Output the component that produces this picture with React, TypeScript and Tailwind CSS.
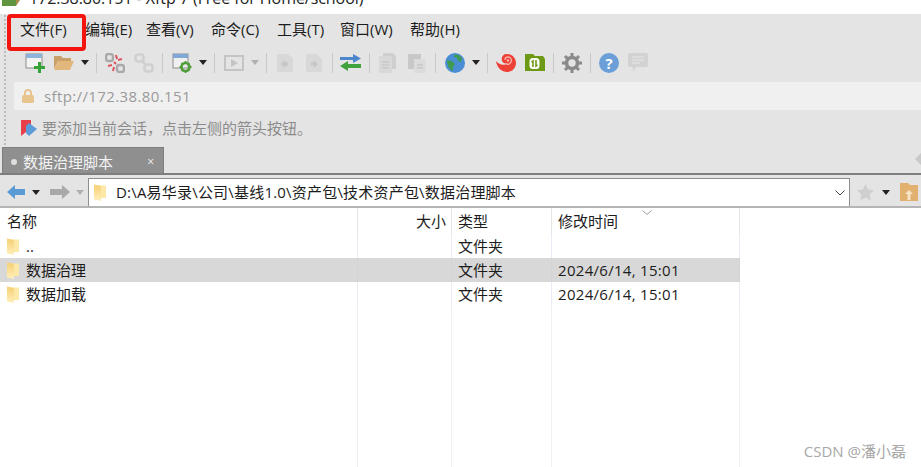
import React from "react";

const Caret = ({ c = "#222", className = "" }: { c?: string; className?: string }) => (
  <svg width="8" height="5" viewBox="0 0 8 5" className={className}><path d="M0 0h8L4 5z" fill={c} /></svg>
);
const Sep = ({ className = "" }: { className?: string }) => <div className={`w-px h-[20px] bg-[#c8c8c8] ${className}`} />;
const Folder = () => (
  <svg width="12" height="17" viewBox="0 0 12 17">
    <defs>
      <linearGradient id="fg" x1="0" y1="0" x2="0" y2="1">
        <stop offset="0" stopColor="#f6cf72" />
        <stop offset="1" stopColor="#fff0bd" />
      </linearGradient>
    </defs>
    <path d="M4 1.500h8V14H4z" fill="#fde8a8" />
    <path d="M0 0.500 7 2v15L0 15.500z" fill="url(#fg)" />
  </svg>
);
const NewSession = () => (
  <svg width="20" height="20" viewBox="0 0 20 20">
    <rect x="1" y="1" width="16" height="14" fill="#f4f4f4" stroke="#8c8c8c" />
    <rect x="1" y="1" width="16" height="4" fill="#8fb4dc" />
    <path d="M13 9h3v4h4v3h-4v4h-3v-4H9v-3h4z" fill="#37a337" />
  </svg>
);
const OpenFolder = () => (
  <svg width="20" height="18" viewBox="0 0 20 18">
    <path d="M0 2h7l2 2h8v3H4L0 15z" fill="#c9a067" />
    <path d="M4 7h16l-4 9H0z" fill="#e2b77c" />
  </svg>
);
const Unlink = () => (
  <svg width="20" height="20" viewBox="0 0 20 20" fill="none">
    <rect x="1" y="1" width="7" height="7" rx="2.500" stroke="#a9a9a9" strokeWidth="2.400" />
    <rect x="12" y="12" width="7" height="7" rx="2.500" stroke="#a9a9a9" strokeWidth="2.400" />
    <path d="M11 2l1 4M17 6l-4 1M3 13l4-1M8 18l1-4M9 9l2 2" stroke="#e0525c" strokeWidth="2" />
  </svg>
);
const LinkI = () => (
  <svg width="20" height="20" viewBox="0 0 20 20" fill="none" stroke="#d0d0d0" strokeWidth="2.600">
    <rect x="1.500" y="1.500" width="8" height="7" rx="2.500" />
    <rect x="10.500" y="11.500" width="8" height="7" rx="2.500" />
    <path d="M7 7l6 6" />
  </svg>
);
const WinGear = () => (
  <svg width="20" height="20" viewBox="0 0 20 20">
    <rect x="1" y="1" width="15" height="14" fill="#efefef" stroke="#8c8c8c" />
    <rect x="1" y="1" width="15" height="4" fill="#7fa8d6" />
    <circle cx="13.500" cy="14" r="4" fill="none" stroke="#4f9e3a" strokeWidth="2.600" />
    <path d="M13.500 8v2M13.500 18v2M7.500 14h2M17.500 14h2M9.500 10l1.400 1.400M16 16.500l1.400 1.400M9.500 18l1.400-1.400M16 11.500l1.400-1.400" stroke="#4f9e3a" strokeWidth="1.800" />
  </svg>
);
const Play = () => (
  <svg width="20" height="16" viewBox="0 0 20 16">
    <rect x="1" y="1" width="18" height="14" fill="#e4e4e4" stroke="#c4c4c4" strokeWidth="2" />
    <path d="M7 4l7 4-7 4z" fill="#c4c4c4" />
  </svg>
);
const Doc = ({ dir }: { dir: "l" | "r" }) => (
  <svg width="16" height="18" viewBox="0 0 16 18">
    <path d="M0 0h11l5 5v13H0z" fill="#d8d8d8" />
    <path d={dir === "l" ? "M4 10l4-4v2.500h3v3H8V14z" : "M12 10L8 6v2.500H5v3h3V14z"} fill="#c6c6c6" />
  </svg>
);
const Transfer = () => (
  <svg width="21" height="17" viewBox="0 0 21 17">
    <path d="M0 3h13V0l8 4.500L13 9V6H0z" fill="#4c86cc" />
    <path d="M21 10H8V7l-8 5 8 5v-3h13z" fill="#3fa23f" />
  </svg>
);
const Copy = () => (
  <svg width="17" height="20" viewBox="0 0 17 20">
    <path d="M4 0h10l3 3v13H4z" fill="#cfcfcf" />
    <path d="M0 3h13v17H0z" fill="#d8d8d8" />
    <path d="M3 9h7M3 12h7M3 15h7" stroke="#c2c2c2" />
  </svg>
);
const Paste = () => (
  <svg width="18" height="20" viewBox="0 0 18 20">
    <path d="M0 1h13v15H0z" fill="#c8c8c8" />
    <path d="M6 6h12v14H6z" fill="#dcdcdc" />
    <path d="M9 12h6M9 15h6" stroke="#bdbdbd" />
  </svg>
);
const Globe = () => (
  <svg width="20" height="20" viewBox="0 0 20 20">
    <circle cx="10" cy="10" r="10" fill="#4a8fd6" />
    <path d="M9 2c3-1 6 0 8 3l-1 4-3-1-1-3-3-1zM2 7l5 1 3 3-2 3 0 4C5 17 2 13 2 7z" fill="#3f9b53" />
  </svg>
);
const Spiral = () => (
  <svg width="20" height="18" viewBox="0 0 20 18">
    <path d="M0 7c1 7 6 11 11 11 5 0 9-4 9-9 0-5-4-9-9-9C7 0 5 3 6 7c1 2 3 3 6 2-3 3-9 2-12-2z" fill="#ee4135" />
    <path d="M9 6c0-2 1-3 3-3 3 0 4 3 3 5-1 2-3 3-5 2" fill="none" stroke="#f8b3ad" strokeWidth="1.300" />
    <circle cx="12" cy="6.500" r="1.300" fill="#f8b3ad" />
  </svg>
);
const GreenFolder = () => (
  <svg width="20" height="17" viewBox="0 0 20 17">
    <path d="M0 0h8l2 2h8l2 3v12H0z" fill="#6d9a14" />
    <rect x="4.500" y="4" width="10" height="11" rx="3.500" fill="#fff" />
    <path d="M8 13V7l-1.500 1M11 6v6l1.500-1" fill="none" stroke="#6d9a14" strokeWidth="1.600" />
  </svg>
);
const Gear = () => (
  <svg width="20" height="20" viewBox="0 0 20 20">
    <circle cx="10" cy="10" r="5.500" fill="none" stroke="#8a8a8a" strokeWidth="3.600" />
    <path d="M10 0v4M10 16v4M0 10h4M16 10h4M3 3l3 3M14 14l3 3M3 17l3-3M14 6l3-3" stroke="#8a8a8a" strokeWidth="3" />
  </svg>
);
const Help = () => (
  <div className="w-[20px] h-[20px] rounded-full bg-[#6c9fd8] text-white text-[15px] font-bold leading-[20px] text-center">?</div>
);
const Chat = () => (
  <svg width="20" height="19" viewBox="0 0 20 19">
    <path d="M2 0h16a2 2 0 0 1 2 2v10a2 2 0 0 1-2 2H8l-3 5v-5H2a2 2 0 0 1-2-2V2a2 2 0 0 1 2-2z" fill="#d2d2d2" />
    <path d="M4 4h12M4 7h12M4 10h8" stroke="#e8e8e8" />
  </svg>
);

const Row = ({ name, time, selected }: { name: string; time?: string; selected?: boolean }) => {
  const line = selected ? "border-[#d4d4d4]" : "border-[#e9eef6]";
  return (
    <div className="flex h-[24px] items-center text-[15px] text-[#1c1c1c]">
      <div className={`flex h-full w-[740px] ${selected ? "bg-[#d8d8d8]" : ""}`}>
        <div className={`w-[358px] flex items-center pl-[7px] border-r ${line}`}>
          <Folder />
          <span className="ml-[7px]">{name}</span>
        </div>
        <div className={`w-[94px] border-r ${line}`} />
        <div className={`w-[100px] pl-[6px] border-r ${line} flex items-center`}>文件夹</div>
        <div className={`flex-1 pl-[6px] border-r ${line} flex items-center tracking-[0.3px]`}>{time}</div>
      </div>
    </div>
  );
};

export default function App() {
  return (
    <div className="relative w-[921px] h-[467px] overflow-hidden bg-white font-['Open_Sans','Noto_Sans_CJK_SC',sans-serif] text-[15px]">
      {/* title */}
      <div className="h-[14px] overflow-hidden flex items-end pl-[2px] bg-white">
        <svg width="18" height="6" viewBox="0 0 18 6" className="mb-[8px]"><path d="M0 0h14v6H0z" fill="#5f9440" /><path d="M14 0h4l-4 6z" fill="#a98a4a" /></svg>
        <span className="ml-[9px] text-[16px] leading-[24px] tracking-[-0.05px] text-[#222] whitespace-nowrap mb-[4px]">172.38.80.151 - Xftp 7 (Free for Home/school)</span>
      </div>
      {/* menu and bars */}
      <div className="bg-[#e4e4e4]">
        <div className="h-[32px] flex items-center text-[15px] text-[#1c1c1c] pl-[20px] pb-[2px]">
          <span className="w-[65px]">文件(F)</span>
          <span className="w-[61px]">编辑(E)</span>
          <span className="w-[65px]">查看(V)</span>
          <span className="w-[66px]">命令(C)</span>
          <span className="w-[63px]">工具(T)</span>
          <span className="w-[70px]">窗口(W)</span>
          <span>帮助(H)</span>
        </div>
        <div className="h-[36px] flex items-center pl-[25px] pb-[3px]">
          <NewSession />
          <div className="ml-[9px]"><OpenFolder /></div>
          <Caret className="ml-[7px]" />
          <Sep className="ml-[7px]" />
          <div className="ml-[8px]"><Unlink /></div>
          <div className="ml-[9px]"><LinkI /></div>
          <Sep className="ml-[8px]" />
          <div className="ml-[9px]"><WinGear /></div>
          <Caret className="ml-[7px]" />
          <Sep className="ml-[7px]" />
          <div className="ml-[9px]"><Play /></div>
          <Caret c="#b0b0b0" className="ml-[7px]" />
          <Sep className="ml-[7px]" />
          <div className="ml-[10px]"><Doc dir="l" /></div>
          <div className="ml-[13px]"><Doc dir="r" /></div>
          <Sep className="ml-[10px]" />
          <div className="ml-[7px]"><Transfer /></div>
          <Sep className="ml-[8px]" />
          <div className="ml-[9px]"><Copy /></div>
          <div className="ml-[12px]"><Paste /></div>
          <Sep className="ml-[9px]" />
          <div className="ml-[9px]"><Globe /></div>
          <Caret className="ml-[7px]" />
          <Sep className="ml-[7px]" />
          <div className="ml-[8px]"><Spiral /></div>
          <div className="ml-[9px]"><GreenFolder /></div>
          <Sep className="ml-[8px]" />
          <div className="ml-[8px]"><Gear /></div>
          <Sep className="ml-[8px]" />
          <div className="ml-[8px]"><Help /></div>
          <div className="ml-[9px]"><Chat /></div>
        </div>
        <div className="h-[28px] ml-[14px] bg-[#f0f0f0] flex items-center pl-[8px] text-[15px] text-[#9a9a9a]">
          <svg width="12" height="14" viewBox="0 0 12 14"><path d="M3 6V4a3 3 0 0 1 6 0v2" fill="none" stroke="#e8c48f" strokeWidth="2" /><rect x="0" y="6" width="12" height="8" rx="1.500" fill="#e8c48f" /></svg>
          <span className="ml-[10px] tracking-[0.38px]">sftp://172.38.80.151</span>
        </div>
        <div className="h-[37px] flex items-center pl-[21px] pb-[1px] text-[15px] text-[#8c8c8c]">
          <svg width="16" height="16" viewBox="0 0 16 16"><path d="M0 0h10v8L0 16z" fill="#e8404a" /><path d="M8 3l8 6-8 7-3-3V6z" fill="#5a9bd8" /></svg>
          <span className="ml-[5px]">要添加当前会话，点击左侧的箭头按钮。</span>
        </div>
        <div className="h-[28px] flex items-end pl-[2px] border-b-2 border-[#7e7e7e] relative">
          <div className="w-[162px] h-[26px] bg-[#8f8f8f] border-t border-x border-[#7e7e7e] flex items-center pl-[8px] pt-[3px] text-[#f4f4f4]">
            <div className="w-[6px] h-[6px] rounded-full bg-[#dedede]" />
            <span className="ml-[6px] text-[15px]">数据治理脚本</span>
            <span className="ml-auto mr-[9px] text-[12px] leading-none">×</span>
          </div>
          <svg width="6" height="12" viewBox="0 0 6 12" className="absolute right-0 bottom-[8px]"><path d="M6 0v12L0 6z" fill="#c8c8c8" /></svg>
        </div>
        <div className="h-[33px] flex items-center pt-[3px] border-b-2 border-[#b5b5b5]">
          <svg width="18" height="14" viewBox="0 0 18 14" className="ml-[7px]"><path d="M0 7l8-7v4h10v6H8v4z" fill="#5b9bd5" /></svg>
          <Caret className="ml-[7px]" />
          <svg width="20" height="14" viewBox="0 0 20 14" className="ml-[10px]"><path d="M20 7l-8-7v4H0v6h12v4z" fill="#a9a9a9" /></svg>
          <Caret c="#b0b0b0" className="ml-[6px]" />
          <div className="ml-[4px] w-[762px] h-[28px] self-end bg-white border-t border-x border-[#8e8e8e] flex items-center pl-[5px] text-[15px] text-[#1c1c1c]">
            <Folder />
            <span className="ml-[10px] tracking-[0.2px]">D:\A易华录\公司\基线1.0\资产包\技术资产包\数据治理脚本</span>
            <svg width="10" height="6" viewBox="0 0 10 6" className="ml-auto mr-[4px]" fill="none" stroke="#444"><path d="M0.500 0.500 5 5l4.500-4.500" /></svg>
          </div>
          <svg width="17" height="17" viewBox="0 0 17 17" className="ml-[7px]"><path d="M8.500 0l2.600 5.600 5.900.7-4.400 4.100 1.200 6L8.500 13.400 3.200 16.400l1.200-6L0 6.300l5.900-.7z" fill="#cfcfcf" /></svg>
          <Caret className="ml-[8px]" />
          <svg width="18" height="18" viewBox="0 0 18 18" className="ml-[10px]"><path d="M0 0h8l2 2h8v16H0z" fill="#e2b06f" /><path d="M9 7l4 4h-2.500v6h-3v-6H5z" fill="#f7e4c8" /></svg>
        </div>
      </div>
      {/* list */}
      <div className="relative h-[259px]">
        <div className="flex h-[26px] items-center text-[15px] text-[#1c1c1c] w-[740px]">
          <div className="w-[358px] h-full flex items-center pl-[7px] border-r border-[#e4e4e4]">名称</div>
          <div className="w-[94px] h-full flex items-center justify-end pr-[5px] border-r border-[#e4e4e4]">大小</div>
          <div className="w-[100px] h-full flex items-center pl-[6px] border-r border-[#e4e4e4]">类型</div>
          <div className="flex-1 h-full flex items-center pl-[6px] border-r border-[#e4e4e4] relative">
            修改时间
            <svg width="10" height="5" viewBox="0 0 10 5" className="absolute left-[90px] top-[2px]" fill="none" stroke="#9a9a9a"><path d="M0.500 0.500 5 4.500l4.500-4" /></svg>
          </div>
        </div>
        <Row name=".." />
        <Row name="数据治理" time="2024/6/14, 15:01" selected />
        <Row name="数据加载" time="2024/6/14, 15:01" />
        <div className="flex h-[161px] w-[740px]">
          <div className="w-[358px] border-r border-[#f0f0f0]" />
          <div className="w-[94px] border-r border-[#f0f0f0]" />
          <div className="w-[100px] border-r border-[#f0f0f0]" />
          <div className="flex-1 border-r border-[#f0f0f0]" />
        </div>
        <span className="absolute right-[15px] bottom-[5px] text-[15px] text-[#a8a8a8]">CSDN @潘小磊</span>
      </div>
      {/* annotation + grip */}
      <div className="absolute left-[7px] top-[14px] w-[79px] h-[37px] border-4 border-[#f5150f] rounded-[4px]" />
      <div className="absolute left-[4px] top-[15px] h-[130px] border-l-2 border-dotted border-[#bcbcbc]" />
    </div>
  );
}
